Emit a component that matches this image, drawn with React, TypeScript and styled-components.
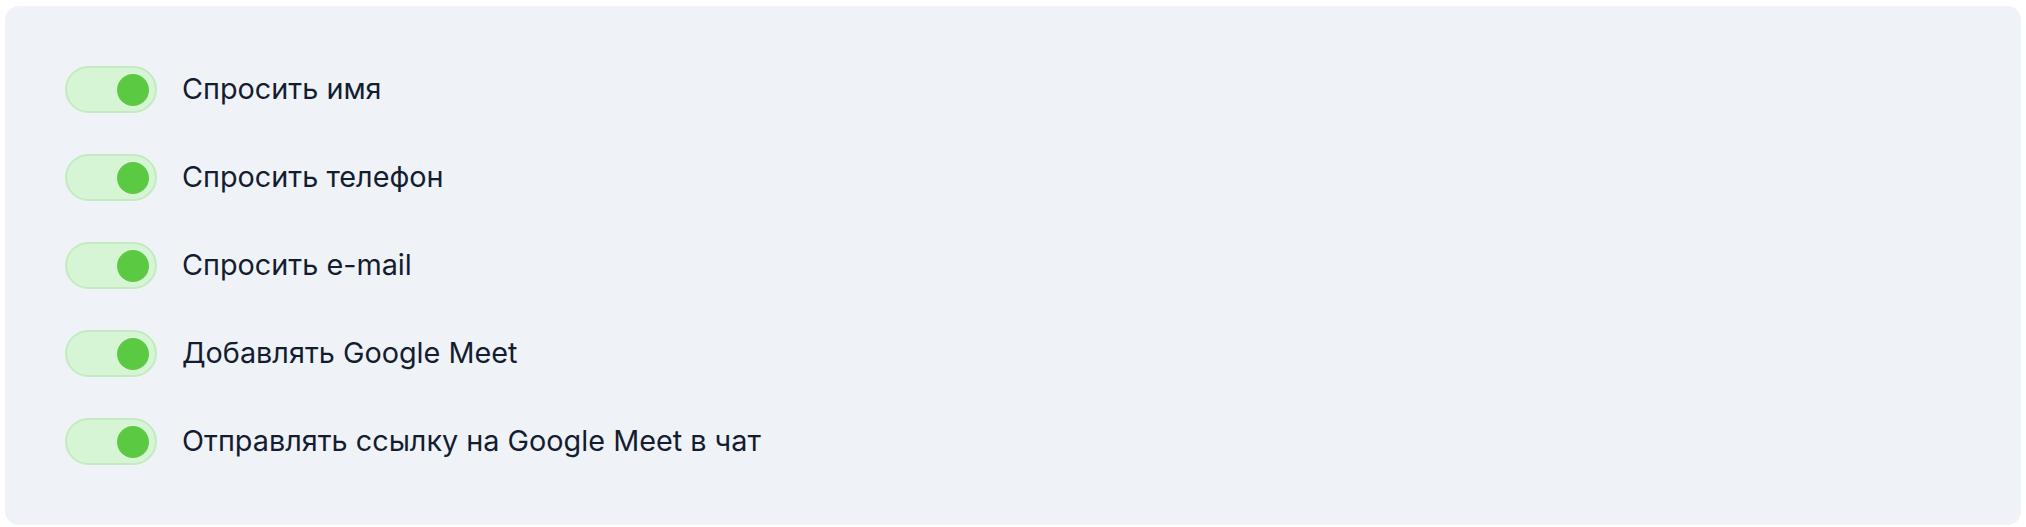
import React, { useState } from "react";
import styled, { createGlobalStyle } from "styled-components";

const Global = createGlobalStyle`
  html, body { margin: 0; padding: 0; background: #ffffff; }
  body { font-family: Inter, "Noto Sans", sans-serif; }
`;

const Page = styled.div`
  padding: 6px 5px 2px 5px;
`;

const Panel = styled.div`
  background: #eff3f8;
  border-radius: 14px;
  padding: 60px;
  display: flex;
  flex-direction: column;
  gap: 41px;
`;

const Row = styled.label`
  display: flex;
  align-items: center;
  gap: 25px;
  cursor: pointer;
`;

const Track = styled.span<{ $on: boolean }>`
  box-sizing: border-box;
  width: 92px;
  height: 47px;
  border-radius: 24px;
  border: 2px solid ${(p) => (p.$on ? "#c4eac2" : "#d5dbe4")};
  background: ${(p) => (p.$on ? "#d5f5d5" : "#e3e8ef")};
  display: flex;
  align-items: center;
  justify-content: ${(p) => (p.$on ? "flex-end" : "flex-start")};
  padding: 0 6px;
  flex-shrink: 0;
`;

const Knob = styled.span<{ $on: boolean }>`
  width: 32px;
  height: 32px;
  border-radius: 50%;
  background: ${(p) => (p.$on ? "#5cc943" : "#a0aab8")};
`;

const Label = styled.span`
  font-family: Inter, "Noto Sans", sans-serif;
  font-size: 28.8px;
  color: #141d30;
  line-height: 1.2;
`;

const items = [
  "Спросить имя",
  "Спросить телефон",
  "Спросить e-mail",
  "Добавлять Google Meet",
  "Отправлять ссылку на Google Meet в чат",
];

export default function App() {
  const [state, setState] = useState<boolean[]>(items.map(() => true));
  return (
    <>
      <Global />
      <Page>
        <Panel>
          {items.map((t, i) => (
            <Row
              key={t}
              onClick={() =>
                setState((s) => s.map((v, j) => (j === i ? !v : v)))
              }
            >
              <Track $on={state[i]}>
                <Knob $on={state[i]} />
              </Track>
              <Label>{t}</Label>
            </Row>
          ))}
        </Panel>
      </Page>
    </>
  );
}
